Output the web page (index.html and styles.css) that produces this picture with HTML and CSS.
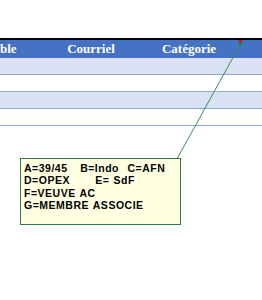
FILE: index.html
```html
<!DOCTYPE html>
<html lang="fr">
<head>
    <meta charset="UTF-8">
    <title>Membres</title>
    <link rel="stylesheet" href="styles.css">
</head>
<body>
    <div class="sheet">
        <div class="row head">
            <div class="cell first">ble</div>
            <div class="cell">Courriel</div>
            <div class="cell noted">Catégorie<span class="mark"></span></div>
            <div class="cell"></div>
        </div>
        <div class="row band"></div>
        <div class="row"></div>
        <div class="row band"></div>
        <div class="row"></div>
    </div>

    <svg class="leader" width="262" height="300">
        <line x1="241" y1="43" x2="177.5" y2="158" stroke="#3b8a5a" stroke-width="1"/>
        <rect x="239" y="42" width="3" height="3" fill="#2f7a4a"/>
    </svg>

    <div class="comment">A=39/45   B=Indo  C=AFN
D=OPEX      E= SdF
F=VEUVE AC
G=MEMBRE ASSOCIE</div>
</body>
</html>
```

FILE: styles.css
```css
body {
    margin: 0;
    background: #ffffff;
    font-family: "Liberation Serif", serif;
}
.sheet {
    margin-top: 38px;
    border-top: 2px solid #000000;
}
.row {
    display: grid;
    grid-template-columns: 42px 98px 102px 1fr;
    height: 16px;
    border-bottom: 1px solid #8eaadb;
}
.band {
    background: #d9e1f2;
}
.head {
    height: 18px;
    border-bottom: none;
    background: #4472c4;
    color: #ffffff;
    font-weight: bold;
    font-size: 13px;
    line-height: 18px;
}
.cell {
    text-align: center;
    white-space: nowrap;
}
.first {
    text-align: left;
}
.noted {
    position: relative;
    padding-right: 4px;
}
.mark {
    position: absolute;
    right: 0;
    top: 0;
    border-top: 4px solid #ff0000;
    border-left: 4px solid transparent;
}
.leader {
    position: absolute;
    left: 0;
    top: 0;
}
.comment {
    position: absolute;
    left: 20px;
    top: 158px;
    width: 153px;
    height: 59px;
    padding: 3px 3px 3px 3px;
    background: #ffffe1;
    border: 1px solid #2f7a4a;
    font-family: "Liberation Sans", Arial, sans-serif;
    font-weight: bold;
    font-size: 10.5px;
    letter-spacing: 0.5px;
    word-spacing: 0.8px;
    line-height: 12.4px;
    color: #000000;
    white-space: pre;
}
```
